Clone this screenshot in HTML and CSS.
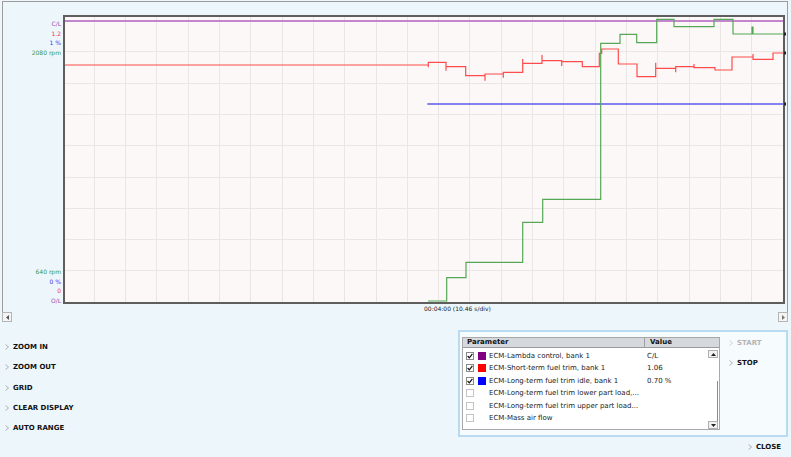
FILE: index.html
```html
<!DOCTYPE html>
<html>
<head>
<meta charset="utf-8">
<link rel="stylesheet" href="styles.css">
</head>
<body>
<div class="chart-frame">
  <div class="chart-row">
    <div class="axis">
      <div class="axis-group">
        <span class="c-purple">C/L</span>
        <span class="c-red">1.2</span>
        <span class="c-blue">1 %</span>
        <span class="c-green">2080 rpm</span>
      </div>
      <div class="axis-group">
        <span class="c-green">640 rpm</span>
        <span class="c-blue">0 %</span>
        <span class="c-red">0</span>
        <span class="c-purple">O/L</span>
      </div>
    </div>
    <svg class="plot" viewBox="62 15 724 290" width="724" height="290">
      <rect x="64" y="16" width="720" height="287" fill="#fdf8f8"/>
      <path class="grid" d="M94.5 16V303M125.5 16V303M156.5 16V303M188.5 16V303M219.5 16V303M250.5 16V303M282.5 16V303M313.5 16V303M344.5 16V303M376.5 16V303M407.5 16V303M438.5 16V303M469.5 16V303M501.5 16V303M532.5 16V303M563.5 16V303M595.5 16V303M626.5 16V303M657.5 16V303M689.5 16V303M720.5 16V303M751.5 16V303M64 51.5H784M64 83.5H784M64 114.5H784M64 145.5H784M64 177.5H784M64 208.5H784M64 239.5H784M64 270.5H784"/>
      <line x1="64" y1="21" x2="784" y2="21" stroke="#c286cf" stroke-width="2"/>
      <line x1="427.3" y1="104" x2="784" y2="104" stroke="#5a5af0" stroke-width="1.4"/>
      <polyline class="trace" stroke="#ff4b4b" points="64,65 428.3,65 428.3,67.3 428.3,62.3 446,62.3 446,70.7 446,66.7 465.7,66.7 465.7,75.7 485,75.7 485,80.7 485,74 503.3,74 503.3,77.7 503.3,72.3 522.7,72.3 522.7,59 522.7,63.3 542,63.3 542,55 542,60.7 561.7,60.7 561.7,66 561.7,61.7 582.3,61.7 582.3,66.7 599.3,66.7 599.3,53.3 601.7,53.3 601.7,49 618.3,49 618.3,64 637,64 637,76.7 655.7,76.7 655.7,62.7 655.7,68.3 675.7,68.3 675.7,72.3 675.7,66.7 694,66.7 694,64 694,67.7 715,67.7 715,70 732,70 732,57 753,57 753,54 753,59.3 773,59.3 773,53 784,53"/>
      <polyline class="trace" stroke="#55a755" points="428,301 446.7,301 446.7,277.7 466,277.7 466,262.3 522.7,262.3 522.7,222.3 542.7,222.3 542.7,199.3 600.7,199.3 600.7,43.3 620,43.3 620,34.3 636.7,34.3 636.7,42.7 656.7,42.7 656.7,19.3 674,19.3 674,26.7 714,26.7 714,19.3 733,19.3 733,34 752,34 752,27 753,27 753,34 784,34"/>
      <rect x="64" y="16" width="720" height="287" fill="none" stroke="#5e5e5e" stroke-width="2"/>
      <rect x="784" y="32.5" width="2.5" height="3" fill="#222"/>
      <rect x="784" y="51.5" width="2.5" height="3" fill="#222"/>
      <rect x="784" y="102.5" width="2.5" height="3" fill="#222"/>
    </svg>
  </div>
  <div class="time-label">00:04:00 (10.46 s/div)</div>
</div>

<div class="hscroll">
  <span class="sbtn"><svg width="3" height="5" viewBox="0 0 3 5"><path d="M3 0L0 2.5L3 5Z" fill="#555"/></svg></span>
  <span class="sbtn"><svg width="3" height="5" viewBox="0 0 3 5"><path d="M0 0L3 2.5L0 5Z" fill="#777"/></svg></span>
</div>

<div class="lower">
  <ul class="actions">
    <li class="action"><svg class="chev" width="4" height="6" viewBox="0 0 4 6"><path d="M0.5 0.5L3.5 3L0.5 5.5"/></svg>ZOOM IN</li>
    <li class="action"><svg class="chev" width="4" height="6" viewBox="0 0 4 6"><path d="M0.5 0.5L3.5 3L0.5 5.5"/></svg>ZOOM OUT</li>
    <li class="action"><svg class="chev" width="4" height="6" viewBox="0 0 4 6"><path d="M0.5 0.5L3.5 3L0.5 5.5"/></svg>GRID</li>
    <li class="action"><svg class="chev" width="4" height="6" viewBox="0 0 4 6"><path d="M0.5 0.5L3.5 3L0.5 5.5"/></svg>CLEAR DISPLAY</li>
    <li class="action"><svg class="chev" width="4" height="6" viewBox="0 0 4 6"><path d="M0.5 0.5L3.5 3L0.5 5.5"/></svg>AUTO RANGE</li>
  </ul>

  <div class="panel">
    <div class="table">
      <div class="thead">
        <div class="th th-param">Parameter</div>
        <div class="th th-value">Value</div>
      </div>
      <div class="tbody">
        <div class="rows">
          <div class="row">
            <span class="cb checked"><svg width="6" height="6" viewBox="0 0 6 6"><path d="M0.6 3L2.3 4.8L5.4 0.8"/></svg></span>
            <span class="swatch sw-purple"></span>
            <span class="name">ECM-Lambda control, bank 1</span>
            <span class="val">C/L</span>
          </div>
          <div class="row">
            <span class="cb checked"><svg width="6" height="6" viewBox="0 0 6 6"><path d="M0.6 3L2.3 4.8L5.4 0.8"/></svg></span>
            <span class="swatch sw-red"></span>
            <span class="name">ECM-Short-term fuel trim, bank 1</span>
            <span class="val">1.06</span>
          </div>
          <div class="row">
            <span class="cb checked"><svg width="6" height="6" viewBox="0 0 6 6"><path d="M0.6 3L2.3 4.8L5.4 0.8"/></svg></span>
            <span class="swatch sw-blue"></span>
            <span class="name">ECM-Long-term fuel trim idle, bank 1</span>
            <span class="val">0.70 %</span>
          </div>
          <div class="row">
            <span class="cb"></span>
            <span class="swatch"></span>
            <span class="name">ECM-Long-term fuel trim lower part load,...</span>
            <span class="val"></span>
          </div>
          <div class="row">
            <span class="cb"></span>
            <span class="swatch"></span>
            <span class="name">ECM-Long-term fuel trim upper part load...</span>
            <span class="val"></span>
          </div>
          <div class="row">
            <span class="cb"></span>
            <span class="swatch"></span>
            <span class="name">ECM-Mass air flow</span>
            <span class="val"></span>
          </div>
        </div>
        <div class="vscroll">
          <span class="vbtn"><svg width="5" height="3" viewBox="0 0 5 3"><path d="M0 3L2.5 0L5 3Z" fill="#222"/></svg></span>
          <span class="vthumb"></span>
          <span class="vtrack"></span>
          <span class="vbtn"><svg width="5" height="3" viewBox="0 0 5 3"><path d="M0 0L2.5 3L5 0Z" fill="#222"/></svg></span>
        </div>
      </div>
    </div>
    <ul class="side-actions">
      <li class="action disabled"><svg class="chev" width="4" height="6" viewBox="0 0 4 6"><path d="M0.5 0.5L3.5 3L0.5 5.5"/></svg>START</li>
      <li class="action"><svg class="chev" width="4" height="6" viewBox="0 0 4 6"><path d="M0.5 0.5L3.5 3L0.5 5.5"/></svg>STOP</li>
    </ul>
  </div>
</div>

<div class="close-row">
  <span class="action"><svg class="chev" width="4" height="6" viewBox="0 0 4 6"><path d="M0.5 0.5L3.5 3L0.5 5.5"/></svg>CLOSE</span>
</div>
</body>
</html>
```

FILE: styles.css
```css
* { box-sizing: border-box; }

html, body {
  margin: 0;
  padding: 0;
}

body {
  width: 791px;
  height: 457px;
  overflow: hidden;
  background: #edf6fb;
  font-family: "DejaVu Sans", Verdana, sans-serif;
  color: #111;
}

ul { list-style: none; margin: 0; padding: 0; }

/* ---------- chart ---------- */
.chart-frame {
  margin: 1px 0 0 2px;
  width: 786px;
  border: 1px solid #9c9c9c;
  border-bottom: none;
  padding-top: 13px;
}

.chart-row {
  display: flex;
  height: 290px;
}

.axis {
  width: 59px;
  display: flex;
  flex-direction: column;
  justify-content: space-between;
  padding: 4px 1px 0 0;
  text-align: right;
  font-size: 6px;
  line-height: 9.5px;
}

.axis-group span { display: block; white-space: nowrap; }

.c-purple { color: #9b4fae; }
.c-red { color: #f03a3a; }
.c-blue { color: #3a3af0; }
.c-green { color: #3c963c; }

.plot { display: block; flex: 0 0 724px; }

.grid { stroke: #ebe6e6; stroke-width: 1; fill: none; }

.trace { fill: none; stroke-width: 1.2; }

.time-label {
  font-size: 6px;
  line-height: 7px;
  padding-left: 421px;
  color: #222;
  white-space: nowrap;
}

.hscroll {
  display: flex;
  justify-content: space-between;
  margin: 0 3px 0 2px;
  height: 10px;
}

.sbtn {
  width: 10px;
  height: 10px;
  border: 1px solid #b5b5b5;
  background: #f4f4f4;
  display: flex;
  align-items: center;
  justify-content: center;
}

/* ---------- lower area ---------- */
.lower {
  display: flex;
  align-items: flex-start;
}

.actions {
  flex: 0 0 458px;
  padding-top: 20px;
  display: flex;
  flex-direction: column;
  gap: 10.25px;
}

.action {
  display: flex;
  align-items: center;
  height: 10px;
  font-size: 7px;
  font-weight: bold;
  color: #111;
  white-space: nowrap;
}

.chev {
  margin: 0 4px 0 5px;
  flex: none;
}
.chev path { fill: none; stroke: #a8a8a8; stroke-width: 0.9; }

.action.disabled { color: #b4b4b4; }
.action.disabled .chev path { stroke: #cfcfcf; }

.panel {
  width: 330px;
  height: 107px;
  margin-top: 8px;
  border: 2px solid #b9dbf1;
  background: #f6fbfe;
  padding: 5px 0 0 2px;
  display: flex;
  align-items: flex-start;
}

.table {
  width: 258px;
  height: 93px;
  border: 1px solid #a9a9a9;
  background: #fff;
  display: flex;
  flex-direction: column;
}

.thead {
  display: flex;
  height: 10px;
  background: #d5d9de;
  border-bottom: 1px solid #9a9a9a;
  font-size: 7px;
  font-weight: bold;
  line-height: 9px;
}

.th-param {
  width: 182px;
  padding-left: 4px;
  border-right: 1px solid #a0a0a0;
}

.th-value {
  flex: 1;
  padding-left: 5px;
}

.tbody {
  flex: 1;
  display: flex;
  min-height: 0;
}

.rows {
  flex: 1;
  padding-top: 1.5px;
}

.row {
  display: flex;
  align-items: center;
  height: 12.5px;
  font-size: 7px;
  color: #222;
}

.cb {
  flex: none;
  width: 8px;
  height: 8px;
  margin-left: 3px;
  border: 1px solid #c4c4c4;
  background: #fff;
  display: flex;
  align-items: center;
  justify-content: center;
}
.cb.checked { border-color: #8a8a8a; }
.cb svg path { fill: none; stroke: #111; stroke-width: 1.2; }

.swatch {
  flex: none;
  width: 8px;
  height: 8px;
  margin-left: 4px;
}
.sw-purple { background: #800080; }
.sw-red { background: #ff0000; }
.sw-blue { background: #0000ff; }

.name {
  flex: 0 0 156px;
  margin-left: 3px;
  white-space: nowrap;
  overflow: hidden;
}

.val {
  flex: 1;
  padding-left: 2px;
  white-space: nowrap;
}

.vscroll {
  flex: 0 0 12px;
  display: flex;
  flex-direction: column;
  padding: 2px 1px 0 1px;
}

.vbtn {
  height: 8px;
  border: 1px solid #b0b0b0;
  background: #f2f2f2;
  display: flex;
  align-items: center;
  justify-content: center;
}

.vthumb { height: 23px; }

.vtrack {
  flex: 1;
  border-right: 1px solid #8c8c8c;
}

.side-actions {
  margin-left: 9px;
  padding-top: 1px;
  display: flex;
  flex-direction: column;
  gap: 10px;
}
.side-actions .chev { margin-left: 0; }

.close-row {
  display: flex;
  justify-content: flex-end;
  margin-top: 5px;
  padding-right: 10px;
}
.close-row .chev { margin-left: 0; }
```
